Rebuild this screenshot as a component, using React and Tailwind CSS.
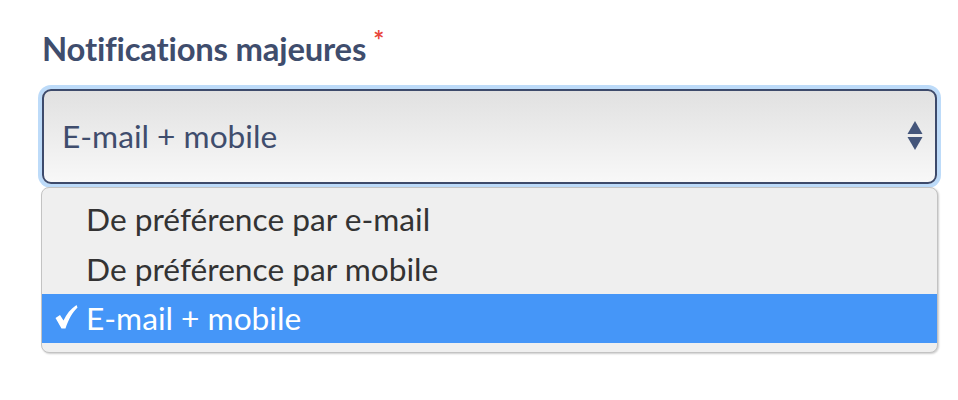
import React from "react";

export default function App() {
  const font = { fontFamily: "Lato, 'Open Sans', sans-serif" };
  return (
    <div className="w-[958px] h-[400px] bg-white overflow-hidden" style={font}>
      <div className="pl-[42px] pt-[29px] pr-[21px]">
        <div className="flex items-start h-[40px]">
          <span className="text-[32.8px] leading-[40px] font-bold text-[#3f4d6d] tracking-[-0.2px]">
            Notifications majeures
          </span>
          <span className="ml-[7px] mt-[1px] text-[26px] leading-[20px] font-bold text-[#e8473b]">*</span>
        </div>
        <div className="mt-[20px] h-[95px] rounded-[9px] border-2 border-[#3d4a6b] shadow-[0_0_0_4px_#bddbf9] bg-gradient-to-b from-[#e1e1e1] to-[#f8f8f8] flex items-center justify-between pl-[18px] pr-[12px]">
          <span className="text-[31.7px] text-[#3f4d6d]">E-mail + mobile</span>
          <svg width="16" height="30" viewBox="0 0 16 30" className="mt-[-1px]">
            <polygon points="8,0 15.5,13 0.5,13" fill="#44557a" />
            <polygon points="0.5,16 15.5,16 8,29" fill="#44557a" />
          </svg>
        </div>
        <div className="mt-[3px] ml-[-1px] mr-[-1px] rounded-[8px] bg-[#efefef] border border-[#c3c3c3] shadow-[1px_1px_2px_rgba(0,0,0,0.2)] pt-[7px] pb-[9px] overflow-hidden">
          <div className="h-[50px] flex items-center pl-[44px] text-[31.7px] text-[#333333]">De préférence par e-mail</div>
          <div className="h-[49px] flex items-center pl-[44px] text-[31.7px] text-[#333333]">De préférence par mobile</div>
          <div className="h-[49px] flex items-center bg-[#4596f8] text-white text-[31.7px]">
            <span className="w-[44px] pl-[13px] flex items-center">
              <svg width="23" height="24" viewBox="0 0 23 24" className="mt-[-3px]">
                <path d="M0.5 13 L5 10 L8.5 15.5 C11.5 9 15.5 4 21.5 0 L22.5 2.5 C17.5 7.5 13.5 14 10.5 23.5 L6.5 23.5 Z" fill="#ffffff" />
              </svg>
            </span>
            <span>E-mail + mobile</span>
          </div>
        </div>
      </div>
    </div>
  );
}
